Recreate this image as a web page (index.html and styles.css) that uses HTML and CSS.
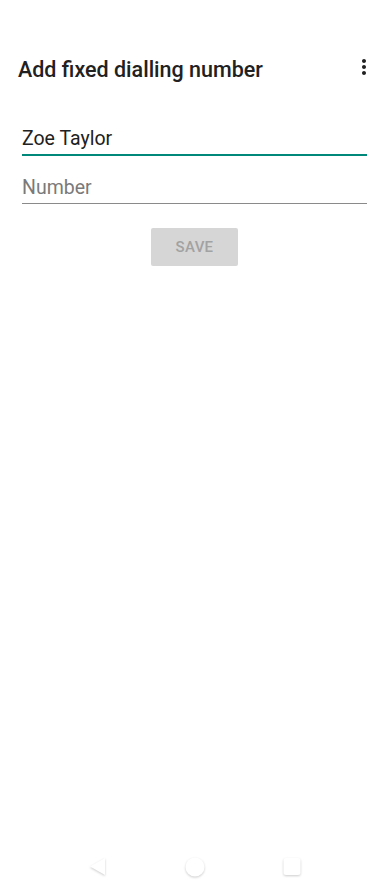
FILE: index.html
```
<!DOCTYPE html>
<html lang="en">
  <head>
    <meta charset="UTF-8" />
    <meta name="viewport" content="width=device-width, initial-scale=1.0" />
    <title>Add fixed dialling number</title>
    <link rel="stylesheet" href="styles.css">
  </head>

  <body>
    <div class="toolbar">
      <h1>Add fixed dialling number</h1>
      <svg class="more" width="24" height="24" viewBox="0 0 24 24">
        <path d="M12 8c1.1 0 2-.9 2-2s-.9-2-2-2-2 .9-2 2 .9 2 2 2zm0 2c-1.1 0-2 .9-2 2s.9 2 2 2 2-.9 2-2-.9-2-2-2zm0 6c-1.1 0-2 .9-2 2s.9 2 2 2 2-.9 2-2-.9-2-2-2z" fill="#212121" />
      </svg>
    </div>

    <div class="form">
      <div class="field active">Zoe Taylor</div>
      <div class="field hint">Number</div>
      <button class="btn" disabled>SAVE</button>
    </div>

    <div class="navbar">
      <div class="nav-item">
        <svg width="22" height="22" viewBox="0 0 22 22">
          <path d="M18 2 V19 L3 10.5 Z" fill="#fff" stroke-linejoin="round" />
        </svg>
      </div>
      <div class="nav-item">
        <svg width="22" height="22" viewBox="0 0 22 22">
          <circle cx="11" cy="11" r="9.5" fill="#fff" />
        </svg>
      </div>
      <div class="nav-item">
        <svg width="22" height="22" viewBox="0 0 22 22">
          <rect x="2.5" y="2" width="17" height="17" rx="2.5" fill="#fff" />
        </svg>
      </div>
    </div>
  </body>
</html>
```

FILE: styles.css
```
* {
  margin: 0;
  padding: 0;
  box-sizing: border-box;
}

body {
  font-family: Roboto, "Noto Sans", sans-serif;
  background: #fff;
  height: 100vh;
  display: flex;
  flex-direction: column;
}

.toolbar {
  margin-top: 42px;
  height: 56px;
  display: flex;
  align-items: center;
  justify-content: space-between;
  padding: 0 13px 0 18px;
}

.toolbar h1 {
  font-size: 21.5px;
  line-height: 24px;
  font-weight: 500;
  color: #212121;
}

.more {
  margin-bottom: 6px;
}

.form {
  display: flex;
  flex-direction: column;
  padding: 0 22px;
  margin-top: 29px;
}

.field {
  font-size: 19.5px;
  line-height: 23px;
  padding-bottom: 4px;
  color: #212121;
  border-bottom: 1px solid #8a8a8a;
}

.field.active {
  border-bottom: 2px solid #00897b;
}

.field.hint {
  margin-top: 20px;
  color: #7a7a7a;
}

.btn {
  align-self: center;
  margin-top: 24px;
  width: 87px;
  height: 38px;
  border: none;
  border-radius: 2px;
  background-color: #d6d6d6;
  color: #a2a2a2;
  font-family: Roboto, sans-serif;
  font-size: 15px;
  font-weight: 500;
  letter-spacing: 0.3px;
}

.navbar {
  margin-top: auto;
  height: 48px;
  display: flex;
  justify-content: center;
}

.nav-item {
  width: 97px;
  display: flex;
  align-items: center;
  justify-content: center;
  padding-bottom: 2px;
}

.nav-item svg {
  filter: drop-shadow(0 1px 1px rgba(0, 0, 0, 0.2));
}
```
